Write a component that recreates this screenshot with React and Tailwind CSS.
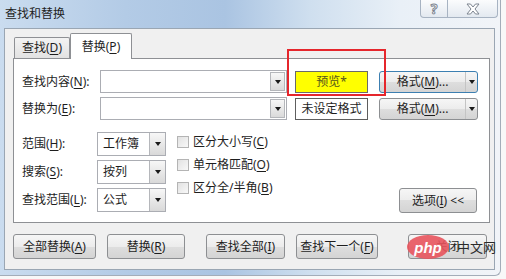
import React from 'react';

const Arrow = () => (
  <span className="w-0 h-0 border-x-[3px] border-x-transparent border-t-[4px] border-t-[#1a1a1a]" />
);

const Key = ({ children }) => <span className="underline underline-offset-2">{children}</span>;

const Btn = ({ w, className = '', children }) => (
  <div
    className={`${w} h-[25px] flex items-center justify-center rounded-[3px] border border-[#8d8f92] bg-[linear-gradient(#f6f6f6,#ececec_50%,#dedede_50%,#d4d4d4)] text-[12px] text-[#1e1e1e] ${className}`}
  >
    {children}
  </div>
);

const DropInput = ({ w }) => (
  <div className={`${w} h-[23px] flex items-center justify-end border border-[#abadb3] bg-white pr-[1px]`}>
    <div className="w-[15px] h-[19px] flex items-center justify-center border border-[#b5b7bb] bg-[linear-gradient(#f7f7f7,#dadada)]">
      <Arrow />
    </div>
  </div>
);

const Select = ({ value }) => (
  <div className="w-[69px] h-[24px] flex items-center border border-[#abadb3] bg-white">
    <span className="flex-1 pl-[5px] text-[12px] text-[#1e1e1e]">{value}</span>
    <div className="w-[16px] h-[22px] mr-[0px] flex items-center justify-center border-l border-[#b5b7bb] bg-[linear-gradient(#f7f7f7,#d9d9d9)]">
      <Arrow />
    </div>
  </div>
);

const FormatBtn = ({ focused }) => (
  <div
    className={`w-[99px] h-[22px] flex items-stretch rounded-[3px] border ${focused ? 'border-[#3c7fb1]' : 'border-[#8d8f92]'} bg-[linear-gradient(#f6f6f6,#ececec_50%,#dedede_50%,#d4d4d4)] text-[12px] text-[#1e1e1e]`}
  >
    <span className="flex-1 flex items-center justify-center">
      格式(<Key>M</Key>)...
    </span>
    <span className="w-[12px] flex items-center justify-center border-l border-[#c4c4c4]">
      <Arrow />
    </span>
  </div>
);

const Check = ({ children }) => (
  <div className="h-[23px] flex items-center gap-[4px] text-[12px] text-[#1e1e1e]">
    <span className="w-[12px] h-[12px] border border-[#b4b4b4] bg-[linear-gradient(135deg,#e2e2e2,#f8f8f8)]" />
    <span>{children}</span>
  </div>
);

export default function App() {
  return (
    <div className="w-[506px] h-[279px] overflow-hidden bg-[#f8f8f8] font-['Noto_Sans','Noto_Sans_CJK_SC',sans-serif]">
      <div className="relative w-[501px] h-[276px] flex flex-col rounded-br-[6px] border-r border-b border-[#a3adb9] bg-[linear-gradient(90deg,#cadcef_0%,#b3cbe6_25%,#aac4e2_45%,#cfdfef_62%,#e9f0f7_80%,#f1f4f8_100%)]">
        {/* Title bar */}
        <div className="h-[28px] flex items-start justify-between">
          <span className="pl-[5px] pt-[5px] text-[12px] leading-[18px] text-[#1e1e1e]">查找和替换</span>
          <div className="flex mr-[2px]">
            <div className="w-[28px] h-[18px] flex items-center justify-center border border-t-0 border-[#a7b3c2] rounded-bl-[4px] bg-[linear-gradient(#fbfcfd,#e3e9f0)] text-[14px] font-bold leading-none text-white [-webkit-text-stroke:1px_#7d8590]">
              ?
            </div>
            <div className="w-[50px] h-[18px] flex items-center justify-center border border-t-0 border-l-0 border-[#a7b3c2] rounded-br-[4px] bg-[linear-gradient(#fbfcfd,#e3e9f0)]">
              <svg width="14" height="12" viewBox="0 0 14 12">
                <path
                  d="M1 1h3.5L7 4l2.5-3H13L9 6l4 5H9.5L7 8l-2.5 3H1l4-5z"
                  fill="#fff"
                  stroke="#7d8590"
                  strokeWidth="1"
                  strokeLinejoin="round"
                />
              </svg>
            </div>
          </div>
        </div>

        {/* Client area */}
        <div className="ml-[4px] mr-[5px] h-[242px] flex flex-col border border-[#9aa6b3] bg-[#f0f0f0]">
          {/* Tabs */}
          <div className="pl-[9px] pt-[4px] h-[29px] flex items-end text-[12px] text-[#1e1e1e]">
            <div className="w-[56px] h-[21px] flex items-center justify-center border border-b-0 border-[#8e9094] rounded-t-[2px] bg-[linear-gradient(#f3f3f3,#e2e2e2)]">
              查找(<Key>D</Key>)
            </div>
            <div className="relative z-10 -mb-px w-[62px] h-[26px] flex items-center justify-center border border-b-0 border-[#8e9094] rounded-t-[2px] bg-white">
              替换(<Key>P</Key>)
            </div>
          </div>

          {/* Panel */}
          <div className="ml-[8px] w-[477px] h-[165px] flex flex-col border border-[#8e9094] bg-white pl-[8px] text-[12px] text-[#1e1e1e]">
            <div className="mt-[11px] h-[23px] flex items-center">
              <span className="w-[78px]">
                查找内容(<Key>N</Key>):
              </span>
              <DropInput w="w-[187px]" />
              <div className="ml-[8px] w-[73px] h-[22px] flex items-center justify-center border border-[#6a6a6a] bg-[#ffff00] text-[#55551c]">
                预览*
              </div>
              <div className="ml-[11px]">
                <FormatBtn focused />
              </div>
            </div>
            <div className="mt-[4px] h-[23px] flex items-center">
              <span className="w-[78px]">
                替换为(<Key>E</Key>):
              </span>
              <DropInput w="w-[187px]" />
              <div className="ml-[8px] w-[73px] h-[22px] flex items-center justify-center border border-[#5e5e5e] bg-white">
                未设定格式
              </div>
              <div className="ml-[11px]">
                <FormatBtn />
              </div>
            </div>

            <div className="mt-[12px] h-[81px] flex">
              <div className="flex flex-col gap-[4px]">
                <div className="flex items-center">
                  <span className="w-[75px]">
                    范围(<Key>H</Key>):
                  </span>
                  <Select value="工作簿" />
                </div>
                <div className="flex items-center">
                  <span className="w-[75px]">
                    搜索(<Key>S</Key>):
                  </span>
                  <Select value="按列" />
                </div>
                <div className="flex items-center">
                  <span className="w-[75px]">
                    查找范围(<Key>L</Key>):
                  </span>
                  <Select value="公式" />
                </div>
              </div>
              <div className="ml-[11px] mt-[-2px] flex flex-col">
                <Check>
                  区分大小写(<Key>C</Key>)
                </Check>
                <Check>
                  单元格匹配(<Key>O</Key>)
                </Check>
                <Check>
                  区分全/半角(<Key>B</Key>)
                </Check>
              </div>
              <div className="ml-auto mr-[12px] self-end">
                <Btn w="w-[78px]">
                  选项(<Key>I</Key>)&nbsp;&lt;&lt;
                </Btn>
              </div>
            </div>
          </div>

          {/* Bottom buttons */}
          <div className="mt-[11px] pl-[8px] flex">
            <Btn w="w-[83px]">
              全部替换(<Key>A</Key>)
            </Btn>
            <Btn w="w-[78px]" className="ml-[11px]">
              替换(<Key>R</Key>)
            </Btn>
            <Btn w="w-[79px]" className="ml-[21px]">
              查找全部(<Key>I</Key>)
            </Btn>
            <Btn w="w-[82px]" className="ml-[11px]">
              查找下一个(<Key>F</Key>)
            </Btn>
            <Btn w="w-[79px]" className="ml-[30px]">
              关闭
            </Btn>
          </div>
        </div>

        {/* Red annotation frame */}
        <div className="absolute left-[287px] top-[49px] w-[99px] h-[47px] border-2 border-[#e5262c]" />

        {/* Watermark */}
        <div className="absolute left-[407px] top-[235px] flex items-center">
          <div className="w-[42px] h-[24px] rounded-[50%] bg-[#e8545d]/90 flex items-center justify-center text-[15px] italic font-bold text-white leading-none font-['Liberation_Sans',sans-serif]">
            php
          </div>
          <span className="ml-[8px] text-[13px] text-[#2a2a2a] font-['Noto_Sans_CJK_SC',sans-serif]">中文网</span>
        </div>
      </div>
    </div>
  );
}
